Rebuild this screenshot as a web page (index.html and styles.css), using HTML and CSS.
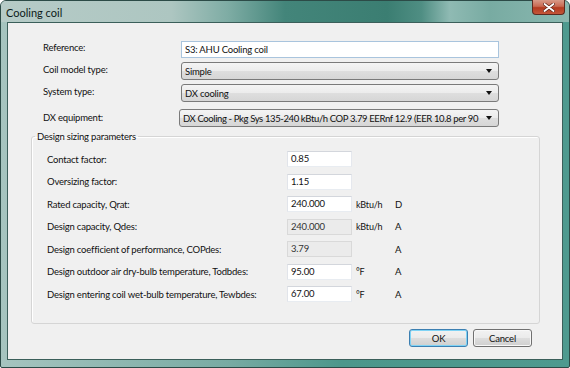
FILE: index.html
```html
<!DOCTYPE html>
<html>
<head>
<meta charset="utf-8">
<title>Cooling coil</title>
<link rel="stylesheet" href="styles.css">
</head>
<body>
<div class="window">
  <div class="titlebar">
    <span class="title">Cooling coil</span>
    <div class="close">
      <svg width="12" height="9" viewBox="0 0 12 9"><path d="M1.5 1 L10.5 8 M10.5 1 L1.5 8" stroke="#5a2418" stroke-width="3.2" stroke-linecap="round"/><path d="M1.5 1 L10.5 8 M10.5 1 L1.5 8" stroke="#fff" stroke-width="1.8" stroke-linecap="round"/></svg>
    </div>
  </div>
  <div class="client">
    <div class="top-grid">
      <label class="lbl">Reference:</label>
      <div class="textbox focused">S3: AHU Cooling coil</div>
      <label class="lbl">Coil model type:</label>
      <div class="combo"><span>Simple</span><i class="arrow"></i></div>
      <label class="lbl">System type:</label>
      <div class="combo"><span>DX cooling</span><i class="arrow"></i></div>
      <label class="lbl lbl-dx">DX equipment:</label>
      <div class="combo combo-dx"><span>DX Cooling - Pkg Sys 135-240 kBtu/h COP 3.79 EERnf 12.9 (EER 10.8 per 90</span><i class="arrow"></i></div>
    </div>
    <fieldset class="group">
      <legend>Design sizing parameters</legend>
      <div class="param-grid">
        <span class="plabel">Contact factor:</span>
        <div class="numbox">0.85</div><span class="unit"></span><span class="flag"></span>
        <span class="plabel">Oversizing factor:</span>
        <div class="numbox">1.15</div><span class="unit"></span><span class="flag"></span>
        <span class="plabel">Rated capacity, Qrat:</span>
        <div class="numbox">240.000</div><span class="unit">kBtu/h</span><span class="flag">D</span>
        <span class="plabel">Design capacity, Qdes:</span>
        <div class="numbox disabled">240.000</div><span class="unit">kBtu/h</span><span class="flag">A</span>
        <span class="plabel">Design coefficient of performance, COPdes:</span>
        <div class="numbox disabled">3.79</div><span class="unit"></span><span class="flag">A</span>
        <span class="plabel">Design outdoor air dry-bulb temperature, Todbdes:</span>
        <div class="numbox">95.00</div><span class="unit">°F</span><span class="flag">A</span>
        <span class="plabel">Design entering coil wet-bulb temperature, Tewbdes:</span>
        <div class="numbox">67.00</div><span class="unit">°F</span><span class="flag">A</span>
      </div>
    </fieldset>
    <div class="buttons">
      <button class="btn default">OK</button>
      <button class="btn">Cancel</button>
    </div>
  </div>
</div>
</body>
</html>
```

FILE: styles.css
```css
html, body {
  margin: 0;
  padding: 0;
}
body {
  width: 570px;
  height: 368px;
  overflow: hidden;
  font-family: Lato, "Liberation Sans", sans-serif;
  font-size: 9.5px;
  letter-spacing: -0.2px;
  color: #111;
  background: #fff;
}
.window {
  box-sizing: border-box;
  width: 570px;
  height: 368px;
  display: flex;
  flex-direction: column;
  padding: 0 6px 7px;
  border: 1px solid #2c4b47;
  border-radius: 6px 6px 2px 2px;
  background: linear-gradient(90deg, #a6c4bf 0%, #78aba3 40%, #4c978b 60%, #4e9a8f 100%);
}
.titlebar {
  position: relative;
  height: 21px;
  margin: 0 -6px;
  padding: 0 6px;
  display: flex;
  align-items: center;
  border-radius: 5px 5px 0 0;
  background: linear-gradient(90deg, #b6cbc7 0%, #adc6c1 30%, #7eaca4 40%, #43857a 50%, #3b7e72 68%, #4f8e83 74%, #8fbab3 79%, #78aba2 86%, #8ab8b0 100%);
}
.title {
  font-size: 11px;
  letter-spacing: 0;
  color: #0c1a18;
  margin-left: -1px;
  padding-top: 1px;
}
.close {
  position: absolute;
  right: 4px;
  top: -1px;
  width: 33px;
  height: 15px;
  box-sizing: border-box;
  border: 1px solid #5d2a20;
  border-top: none;
  border-radius: 0 0 4px 4px;
  background: linear-gradient(180deg, #d89a88 0%, #c96a52 45%, #b33a1f 55%, #c4563a 100%);
  display: flex;
  align-items: center;
  justify-content: center;
}
.client {
  flex: 1;
  position: relative;
  background: #f0f0f0;
  border: 1px solid #3b5f5a;
}
.top-grid {
  display: grid;
  grid-template-columns: 138px 318px;
  grid-template-rows: 17px 17px 17px 20px;
  row-gap: 5px;
  margin: 18px 0 0 35px;
}
.lbl {
  align-self: start;
  line-height: 13px;
}
.lbl-dx {
  align-self: end;
  margin-bottom: 3px;
}
.textbox {
  box-sizing: border-box;
  height: 17px;
  line-height: 15px;
  padding-left: 3px;
  background: #fff;
  border: 1px solid #dbdfe6;
  white-space: nowrap;
}
.textbox.focused {
  border-color: #a9c4dd;
}
.combo {
  box-sizing: border-box;
  height: 18px;
  margin-top: -1px;
  display: flex;
  align-items: center;
  padding: 0 6px 0 3px;
  border: 1px solid #7a7a7a;
  border-radius: 3px;
  background: linear-gradient(180deg, #f4f4f4 0%, #ececec 48%, #dedede 52%, #d6d6d6 100%);
  white-space: nowrap;
  overflow: hidden;
}
.combo span {
  flex: 1;
  overflow: hidden;
}
.combo-dx {
  align-self: end;
  margin-left: -2px;
  margin-top: 0;
}
.combo-dx span {
  letter-spacing: -0.38px;
}
.arrow {
  width: 0;
  height: 0;
  border-left: 3.5px solid transparent;
  border-right: 3.5px solid transparent;
  border-top: 4px solid #111;
  margin-left: 4px;
}
.group {
  box-sizing: border-box;
  width: 509px;
  margin: 3px 0 0 23px;
  padding: 0 0 21px 3px;
  border: 1px solid #d5d5d5;
  border-radius: 3px;
  box-shadow: inset 1px 1px 0 #fff;
}
.group legend {
  padding: 0 2px;
  line-height: 13px;
}
.param-grid {
  display: grid;
  grid-template-columns: 240px 65px 43px 20px;
  grid-auto-rows: 16px;
  row-gap: 6.5px;
  align-items: center;
  margin: 8px 0 0 12px;
}
.numbox {
  box-sizing: border-box;
  height: 16px;
  line-height: 14px;
  padding-left: 3px;
  background: #fff;
  border: 1px solid;
  border-color: #d3d6dc #e5e8ee #e8ecf1 #e1e4ea;
}
.numbox.disabled {
  background: #ebebeb;
  border-color: #d9d9d9;
  color: #333;
}
.unit {
  padding-left: 4px;
  font-size: 9px;
}
.buttons {
  display: flex;
  justify-content: flex-end;
  gap: 5px;
  margin: 5px 30px 0 0;
}
.btn {
  box-sizing: border-box;
  width: 59px;
  height: 18px;
  padding: 0;
  font-family: inherit;
  font-size: 9.5px;
  letter-spacing: -0.2px;
  color: #111;
  border: 1px solid #707070;
  border-radius: 3px;
  background: linear-gradient(180deg, #f2f2f2 0%, #ebebeb 48%, #dddddd 52%, #cfcfcf 100%);
  box-shadow: inset 0 0 0 1px #f8f8f8;
}
.btn.default {
  border-color: #3c7fb1;
  box-shadow: inset 0 0 0 1px #7fd3f5;
}
```
